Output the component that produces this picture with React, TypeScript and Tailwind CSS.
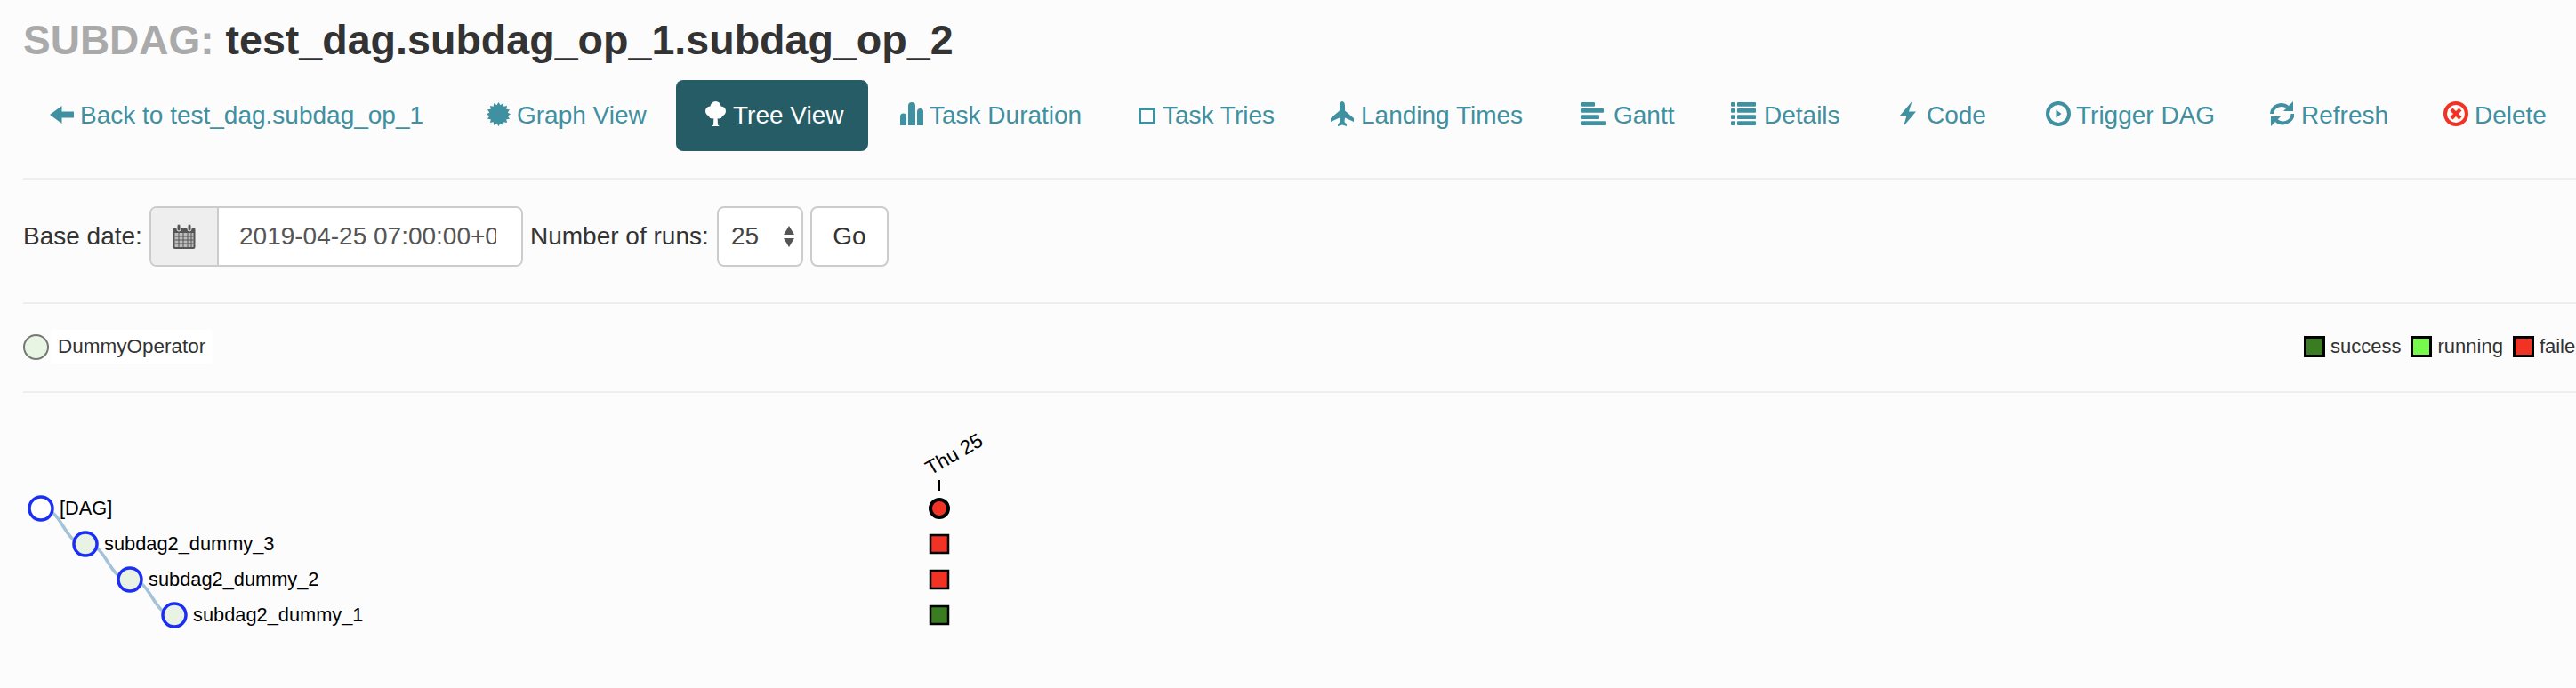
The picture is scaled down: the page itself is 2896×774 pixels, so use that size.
import React from "react";

function Ic({ w, h, vb, children }: { w: number; h: number; vb: string; children: React.ReactNode }) {
  return (
    <svg width={w} height={h} viewBox={vb} fill="currentColor" className="shrink-0 mb-[4px]">
      {children}
    </svg>
  );
}

const ArrowLeft = () => (
  <svg width={27} height={20} viewBox="0 0 27 20" fill="currentColor" className="shrink-0 mb-[2px]">
    <path d="M0 10 L13.500 0 V6.500 H27 V13.500 H13.500 V20 Z" />
  </svg>
);
function starPoints() {
  const pts: string[] = [];
  const n = 16;
  for (let i = 0; i < n * 2; i++) {
    const r = i % 2 === 0 ? 13.5 : 10.5;
    const a = (Math.PI * i) / n;
    pts.push(`${(13.5 + r * Math.sin(a)).toFixed(2)},${(13.5 - r * Math.cos(a)).toFixed(2)}`);
  }
  return pts.join(" ");
}
const Certificate = () => (
  <Ic w={27} h={27} vb="0 0 27 27">
    <polygon points={starPoints()} />
  </Ic>
);
const Tree = () => (
  <Ic w={23} h={28} vb="0 0 23 28">
    <circle cx="11.500" cy="6" r="6" />
    <circle cx="5.500" cy="11" r="5.500" />
    <circle cx="17.500" cy="11" r="5.500" />
    <circle cx="8" cy="15" r="4.500" />
    <circle cx="15" cy="15" r="4.500" />
    <path d="M9.500 16 H13.500 L14 26.500 L16 28 H7 L9 26.500 Z" />
  </Ic>
);
const Stats = () => (
  <Ic w={26} h={26} vb="0 0 26 26">
    <path d="M0 26 V16 A3.500 3.500 0 0 1 7 16 V26 Z" />
    <path d="M9 26 V4 A4 4 0 0 1 17 4 V26 Z" />
    <path d="M19 26 V10.500 A3.500 3.500 0 0 1 26 10.500 V26 Z" />
  </Ic>
);
const Unchecked = () => (
  <svg width={19} height={19} viewBox="0 0 19 19" className="shrink-0" fill="none" stroke="currentColor" strokeWidth="3">
    <rect x="1.500" y="1.500" width="16" height="16" />
  </svg>
);
const Plane = () => (
  <Ic w={26} h={28} vb="0 0 26 28">
    <path d="M13 0 C15 0 16 2.500 16 5 V10.500 L26 19 V23 L16 18.500 L15.500 23 L18 26 V28 L13 26.500 L8 28 V26 L10.500 23 L10 18.500 L0 23 V19 L10 10.500 V5 C10 2.500 11 0 13 0 Z" />
  </Ic>
);
const AlignLeft = () => (
  <Ic w={28} h={26} vb="0 0 28 26">
    <rect x="0" y="0" width="16" height="4.700" rx="1" />
    <rect x="0" y="7.100" width="26" height="4.700" rx="1" />
    <rect x="0" y="14.200" width="21" height="4.700" rx="1" />
    <rect x="0" y="21.300" width="28" height="4.700" rx="1" />
  </Ic>
);
const ListIc = () => (
  <Ic w={28} h={26} vb="0 0 28 26">
    <rect x="0" y="0" width="4.300" height="4.700" rx="1" />
    <rect x="7" y="0" width="21" height="4.700" rx="1" />
    <rect x="0" y="7.100" width="4.300" height="4.700" rx="1" />
    <rect x="7" y="7.100" width="21" height="4.700" rx="1" />
    <rect x="0" y="14.200" width="4.300" height="4.700" rx="1" />
    <rect x="7" y="14.200" width="21" height="4.700" rx="1" />
    <rect x="0" y="21.300" width="4.300" height="4.700" rx="1" />
    <rect x="7" y="21.300" width="21" height="4.700" rx="1" />
  </Ic>
);
const Flash = () => (
  <Ic w={18} h={28} vb="0 0 18 28">
    <path d="M13.500 0 L0 16 H7.500 L4 28 L18 11.500 H10 Z" />
  </Ic>
);
const PlayCircle = () => (
  <Ic w={28} h={28} vb="0 0 28 28">
    <path fillRule="evenodd" d="M14 0 A14 14 0 1 1 14 28 A14 14 0 1 1 14 0 Z M14 4 A10 10 0 1 0 14 24 A10 10 0 1 0 14 4 Z" />
    <path d="M11.500 9.500 L17.500 14 L11.500 18.500 Z" />
  </Ic>
);
const Refresh = () => (
  <svg width={27} height={28} viewBox="0 0 27 28" className="shrink-0 mb-[4px]" fill="none">
    <path d="M2 14 A11 10.500 0 0 1 20 6.500" stroke="currentColor" strokeWidth="4" />
    <path d="M25.500 14 A11 10.500 0 0 1 7 21.500" stroke="currentColor" strokeWidth="4" />
    <path d="M26 0 V11 H15 Z" fill="currentColor" />
    <path d="M1 28 V17 H12 Z" fill="currentColor" />
  </svg>
);
const RemoveCircle = () => (
  <Ic w={28} h={28} vb="0 0 28 28">
    <path fillRule="evenodd" fill="#f03325" d="M14 0 A14 14 0 1 1 14 28 A14 14 0 1 1 14 0 Z M14 4 A10 10 0 1 0 14 24 A10 10 0 1 0 14 4 Z" />
    <path fill="#f03325" d="M10.500 7.500 L14 11 L17.500 7.500 L20.500 10.500 L17 14 L20.500 17.500 L17.500 20.500 L14 17 L10.500 20.500 L7.500 17.500 L11 14 L7.500 10.500 Z" />
  </Ic>
);
const Calendar = () => (
  <svg width={26} height={28} viewBox="0 0 26 28" className="shrink-0">
    <rect x="0.500" y="4" width="25" height="24" rx="2" fill="#555" />
    <rect x="2.500" y="10" width="21" height="16" fill="#bbb" />
    <path d="M2.500 14H23.500M2.500 18H23.500M2.500 22H23.500M7 10V26M12 10V26M17 10V26M21 10V26" stroke="#555" strokeWidth="1" />
    <rect x="5" y="0" width="4" height="8" rx="2" fill="#555" stroke="#eee" />
    <rect x="17" y="0" width="4" height="8" rx="2" fill="#555" stroke="#eee" />
  </svg>
);

const tabs: { icon: React.ReactNode; label: string; cls: string }[] = [
  { icon: <ArrowLeft />, label: "Back to test_dag.subdag_op_1", cls: "w-[491px] pl-[30px] gap-[7px]" },
  { icon: <Certificate />, label: "Graph View", cls: "w-[243px] pl-[30px] gap-[7px]" },
  { icon: <Tree />, label: "Tree View", cls: "w-[216px] pl-[33px] gap-[8px] rounded-[8px] bg-[#265c66] text-white" },
  { icon: <Stats />, label: "Task Duration", cls: "ml-[6px] w-[268px] pl-[30px] gap-[7px]" },
  { icon: <Unchecked />, label: "Task Tries", cls: "w-[216px] pl-[30px] gap-[8px]" },
  { icon: <Plane />, label: "Landing Times", cls: "w-[281px] pl-[30px] gap-[8px]" },
  { icon: <AlignLeft />, label: "Gantt", cls: "w-[169px] pl-[30px] gap-[9px]" },
  { icon: <ListIc />, label: "Details", cls: "w-[190px] pl-[30px] gap-[9px]" },
  { icon: <Flash />, label: "Code", cls: "w-[164px] pl-[30px] gap-[12px]" },
  { icon: <PlayCircle />, label: "Trigger DAG", cls: "w-[252px] pl-[30px] gap-[6px]" },
  { icon: <Refresh />, label: "Refresh", cls: "w-[195px] pl-[30px] gap-[8px]" },
  { icon: <RemoveCircle />, label: "Delete", cls: "w-[179px] pl-[30px] gap-[7px]" },
];

const rows = [
  { y: 572, x: 46, label: "[DAG]", fill: "#ffffff" },
  { y: 612, x: 96, label: "subdag2_dummy_3", fill: "#e8f2e5" },
  { y: 652, x: 146, label: "subdag2_dummy_2", fill: "#e8f2e5" },
  { y: 692, x: 196, label: "subdag2_dummy_1", fill: "#e8f2e5" },
];

function LegendItem({ color, label }: { color: string; label: string }) {
  return (
    <div className="flex items-center shrink-0">
      <span className="w-[24px] h-[24px] border-[3px] border-black shrink-0" style={{ backgroundColor: color }} />
      <span className="ml-[6px] text-[22px] leading-[24px] text-[#333]">{label}</span>
    </div>
  );
}

export default function App() {
  return (
    <div className="w-[2896px] h-[774px] overflow-hidden bg-[#fcfcfc] font-['Liberation_Sans',Arial,sans-serif] text-[#333]">
      <div className="pl-[26px]">
        <h2 className="pt-[20px] h-[90px] text-[46.6px] leading-[50px] font-bold whitespace-nowrap">
          <span className="text-[#aaaaaa] text-[46px]">SUBDAG: </span>
          test_dag.subdag_op_1.subdag_op_2
        </h2>
        <nav className="h-[112px] border-b-2 border-[#eeeeee] flex items-start">
          {tabs.map((t) => (
            <div
              key={t.label}
              className={`${t.cls} h-[80px] shrink-0 flex items-center text-[28px] ${t.label === "Tree View" ? "" : "text-[#3f90a1]"}`}
            >
              {t.icon}
              <span className="whitespace-nowrap">{t.label}</span>
            </div>
          ))}
        </nav>
        <div className="h-[140px] border-b-2 border-[#eeeeee] flex items-start pt-[30px] text-[28px]">
          <div className="h-[68px] flex items-center">
            <span className="w-[142px] shrink-0 whitespace-nowrap">Base date:</span>
            <div className="w-[420px] h-[68px] flex rounded-[8px] border-2 border-[#cccccc] overflow-hidden shrink-0">
              <div className="w-[76px] bg-[#eeeeee] border-r-2 border-[#cccccc] flex items-center justify-center">
                <Calendar />
              </div>
              <input
                readOnly
                value="2019-04-25 07:00:00+00:00"
                className="flex-1 min-w-0 bg-white pl-[23px] pr-[28px] text-[#555] outline-none"
              />
            </div>
            <span className="ml-[8px] w-[210px] shrink-0 whitespace-nowrap">Number of runs:</span>
            <div className="w-[97px] h-[68px] rounded-[8px] border-2 border-[#cccccc] bg-white flex items-center pl-[14px] shrink-0 relative text-[#444]">
              25
              <svg width={14} height={24} viewBox="0 0 14 24" className="absolute right-[7px] top-[20px]" fill="#555">
                <path d="M7 0 L13 10 H1 Z" />
                <path d="M7 24 L13 14 H1 Z" />
              </svg>
            </div>
            <div className="ml-[8px] w-[88px] h-[68px] rounded-[8px] border-2 border-[#cccccc] bg-white flex items-center justify-center shrink-0">
              Go
            </div>
          </div>
        </div>
        <div className="h-[100px] border-b-2 border-[#eeeeee] flex items-center text-[22.5px] pb-[2px]">
          <span className="w-[29px] h-[29px] rounded-full border-2 border-[#777] bg-[#e8f5e2] shrink-0" />
          <span className="ml-[2px] px-[8px] h-[38px] w-[182px] shrink-0 bg-white rounded-[4px] flex items-center whitespace-nowrap">DummyOperator</span>
          <div className="ml-[2351px] flex items-center gap-[11px] shrink-0">
            <LegendItem color="#3a7c22" label="success" />
            <LegendItem color="#76fb4a" label="running" />
            <LegendItem color="#f03325" label="failed" />
          </div>
        </div>
      </div>
      <svg width={2896} height={332} viewBox="0 442 2896 332" className="block">
        <path
          d="M46 572 C71 572 71 612 96 612 C121 612 121 652 146 652 C171 652 171 692 196 692"
          fill="none"
          stroke="#a4c2d8"
          strokeWidth="3.500"
        />
        {rows.map((r) => (
          <g key={r.label}>
            <circle cx={r.x} cy={r.y} r={13} fill={r.fill} stroke="#1a2ef5" strokeWidth="3.500" />
            <text x={r.x + 21} y={r.y + 7} fontSize="21.800" fill="#000">
              {r.label}
            </text>
          </g>
        ))}
        <text x="1046" y="535" fontSize="22.500" fill="#000" transform="rotate(-30 1046 535)">
          Thu 25
        </text>
        <line x1="1056" y1="540" x2="1056" y2="552" stroke="#000" strokeWidth="2" />
        <circle cx="1056" cy="572" r="10" fill="#f03325" stroke="#000" strokeWidth="4" />
        <rect x="1046" y="602" width="20" height="20" fill="#f03325" stroke="#000" strokeWidth="2.500" />
        <rect x="1046" y="642" width="20" height="20" fill="#f03325" stroke="#000" strokeWidth="2.500" />
        <rect x="1046" y="682" width="20" height="20" fill="#3a7c22" stroke="#000" strokeWidth="2.500" />
      </svg>
    </div>
  );
}
